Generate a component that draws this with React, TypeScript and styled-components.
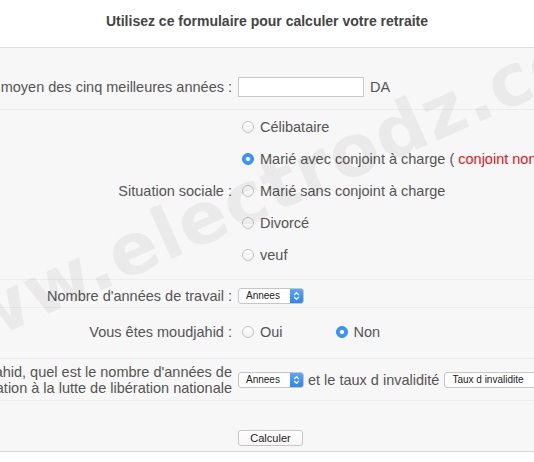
import React from 'react'
import styled, { createGlobalStyle } from 'styled-components'

const GlobalStyle = createGlobalStyle`
  html, body {
    margin: 0;
    padding: 0;
    background: #ffffff;
  }
  body {
    font-family: "Liberation Sans", Arial, sans-serif;
    color: #555555;
  }
`

const Page = styled.div`
  position: relative;
  width: 534px;
  height: 462px;
  overflow: hidden;
  background: #ffffff;
`

const Title = styled.div`
  height: 48px;
  box-sizing: border-box;
  padding-top: 12px;
  line-height: 18px;
  text-align: center;
  font-size: 14px;
  font-weight: bold;
  color: #444444;
  border-bottom: 1px solid #dedede;
`

const Table = styled.div`
  background: #f7f7f7;
  border-bottom: 1px solid #d4d4d4;
`

const Row = styled.div<{ $pad: string }>`
  display: grid;
  grid-template-columns: 235px minmax(0, 1fr);
  padding: ${({ $pad }) => $pad};
  align-items: center;
  border-bottom: 1px solid #ececec;

  &:last-child {
    border-bottom: none;
  }
`

const Label = styled.div`
  display: flex;
  justify-content: flex-end;
  align-items: center;
  align-self: stretch;
  padding-right: 3px;
  white-space: nowrap;
  font-size: 14.5px;
  line-height: 16px;
  color: #555555;
  min-width: 0;
`

const LabelLines = styled.div`
  text-align: right;
  flex-shrink: 0;
`

const Value = styled.div<{ $indent?: number }>`
  display: flex;
  align-items: center;
  padding-left: ${({ $indent }) => $indent ?? 3}px;
  white-space: nowrap;
  font-size: 14.5px;
  color: #555555;
  min-width: 0;
`

const RadioList = styled.div`
  display: flex;
  flex-direction: column;
  padding-left: 7px;
  padding-top: 1px;
  min-width: 0;
`

const RadioItem = styled.label<{ $gap?: number }>`
  display: flex;
  align-items: center;
  height: 32px;
  margin-right: ${({ $gap }) => $gap || 0}px;
  white-space: pre;
  font-size: 14.5px;
  color: #555555;
`

const Radio = styled.span<{ $checked?: boolean }>`
  display: inline-block;
  box-sizing: border-box;
  width: 12px;
  height: 12px;
  margin-right: 6px;
  border-radius: 50%;
  border: 1px solid ${({ $checked }) => ($checked ? '#2d87ea' : '#c2c2c2')};
  background: ${({ $checked }) =>
    $checked
      ? 'radial-gradient(circle, #ffffff 0 1.8px, #3a96f7 2.4px)'
      : 'linear-gradient(#ffffff, #f1f1f1)'};
  flex-shrink: 0;
`

const Red = styled.span`
  color: #e8141b;
`

const TextInput = styled.div`
  box-sizing: border-box;
  width: 126px;
  height: 20px;
  background: #ffffff;
  border: 1px solid #c9c9c9;
  margin-right: 6px;
  flex-shrink: 0;
`

const Select = styled.div<{ $width: number }>`
  display: flex;
  align-items: stretch;
  box-sizing: border-box;
  width: ${({ $width }) => $width}px;
  height: 16px;
  background: #ffffff;
  border: 1px solid #c6c6c6;
  border-radius: 3px;
  font-size: 10px;
  color: #222222;
  overflow: hidden;
  flex-shrink: 0;
`

const SelectText = styled.span`
  flex: 1;
  padding-left: 7px;
  line-height: 14px;
`

const Stepper = styled.span`
  display: flex;
  align-items: center;
  justify-content: center;
  width: 13px;
  background: linear-gradient(#5aa6f8, #2f85ec);
`

const Inline = styled.span`
  margin: 0 5px 0 4px;
  font-size: 14.5px;
`

const Button = styled.div`
  box-sizing: border-box;
  width: 65px;
  height: 16px;
  background: linear-gradient(#ffffff, #f6f6f6);
  border: 1px solid #c6c6c6;
  border-radius: 3px;
  font-size: 11px;
  line-height: 14px;
  text-align: center;
  color: #222222;
`

const Watermark = styled.div`
  position: absolute;
  left: 274px;
  top: 186px;
  transform: translate(-50%, -50%) rotate(-24deg);
  font-family: "DejaVu Sans", "Liberation Sans", sans-serif;
  font-weight: bold;
  font-size: 72px;
  letter-spacing: 1px;
  white-space: nowrap;
  color: rgba(0, 0, 0, 0.05);
  pointer-events: none;
`

const StepIcon = () => (
  <svg width="7" height="10" viewBox="0 0 7 10">
    <path d="M1.2 4 L3.5 1.7 L5.8 4 M1.2 6 L3.5 8.3 L5.8 6" fill="none" stroke="#ffffff" strokeWidth="1.2" />
  </svg>
)

const SelectBox = ({ width, text }: { width: number; text: string }) => (
  <Select $width={width}>
    <SelectText>{text}</SelectText>
    <Stepper>
      <StepIcon />
    </Stepper>
  </Select>
)

const situations = [
  { text: 'Célibataire' },
  { text: 'Marié avec conjoint à charge ( ', extra: 'conjoint non salarié )', checked: true },
  { text: 'Marié sans conjoint à charge' },
  { text: 'Divorcé' },
  { text: 'veuf' },
]

const App = () => {
  return (
    <Page>
      <GlobalStyle />
      <Title>Utilisez ce formulaire pour calculer votre retraite</Title>
      <Table>
        <Row $pad="29px 0 12px">
          <Label>Salaire moyen des cinq meilleures années :</Label>
          <Value>
            <TextInput />
            DA
          </Value>
        </Row>
        <Row $pad="0 0 8px">
          <Label>Situation sociale :</Label>
          <RadioList>
            {situations.map((s) => (
              <RadioItem key={s.text}>
                <Radio $checked={s.checked} />
                <span>
                  {s.text}
                  {s.extra && <Red>{s.extra}</Red>}
                </span>
              </RadioItem>
            ))}
          </RadioList>
        </Row>
        <Row $pad="8px 0 3px">
          <Label>Nombre d'années de travail :</Label>
          <Value>
            <SelectBox width={66} text="Annees" />
          </Value>
        </Row>
        <Row $pad="8px 0 10px">
          <Label>Vous êtes moudjahid :</Label>
          <Value $indent={7}>
            <RadioItem $gap={53}>
              <Radio />
              Oui
            </RadioItem>
            <RadioItem>
              <Radio $checked />
              Non
            </RadioItem>
          </Value>
        </Row>
        <Row $pad="5px 0 4px">
          <Label>
            <LabelLines>
              Si vous êtes moudjahid, quel est le nombre d'années de
              <br />
              participation à la lutte de libération nationale
            </LabelLines>
          </Label>
          <Value>
            <SelectBox width={66} text="Annees" />
            <Inline>et le taux d invalidité</Inline>
            <SelectBox width={130} text="Taux d invalidite" />
          </Value>
        </Row>
        <Row $pad="29px 0 5px">
          <Label />
          <Value>
            <Button>Calculer</Button>
          </Value>
        </Row>
      </Table>
      <Watermark>www.electrodz.com</Watermark>
    </Page>
  )
}

export default App
